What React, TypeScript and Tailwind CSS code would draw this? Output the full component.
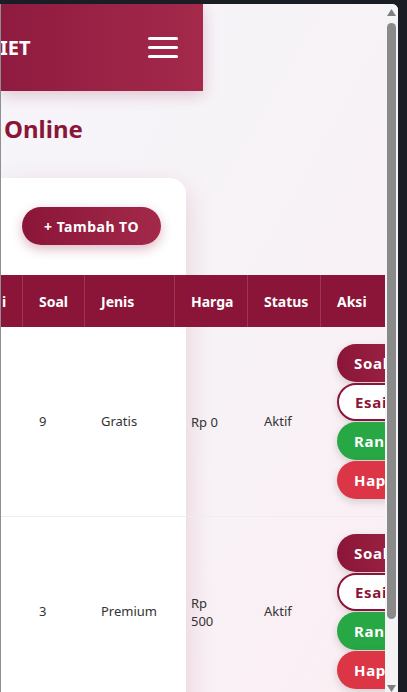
import React from "react";

const font = { fontFamily: '"Noto Sans", "Open Sans", Arial, sans-serif' };

function ActionButtons() {
  return (
    <div className="flex flex-col gap-px">
      <div className="h-[38px] w-[90px] rounded-full bg-gradient-to-r from-[#8b1538] to-[#a3294a] text-white font-bold text-[15px] tracking-[0.7px] flex items-center pl-[17px] shadow-[0_3px_8px_rgba(0,0,0,0.15)]">
        Soal
      </div>
      <div className="h-[38px] w-[90px] rounded-full bg-white border-2 border-[#8b1538] text-[#8b1538] font-bold text-[15px] tracking-[0.7px] flex items-center pl-[16px] shadow-[0_3px_8px_rgba(0,0,0,0.12)]">
        Esai
      </div>
      <div className="h-[38px] w-[100px] rounded-full bg-[#28a745] text-white font-bold text-[15px] tracking-[0.7px] flex items-center pl-[17px] shadow-[0_3px_8px_rgba(0,0,0,0.15)]">
        Ranking
      </div>
      <div className="h-[38px] w-[90px] rounded-full bg-[#dc3545] text-white font-bold text-[15px] tracking-[0.7px] flex items-center pl-[17px] shadow-[0_3px_8px_rgba(0,0,0,0.15)]">
        Hapus
      </div>
    </div>
  );
}

function Row({ soal, jenis, harga }: { soal: string; jenis: string; harga: string }) {
  return (
    <div className="grid grid-cols-[22px_62px_90px_73px_73px_120px] items-center border-b border-[#eeeeee] text-[13px] text-[#333333]">
      <div />
      <div className="px-4">{soal}</div>
      <div className="px-4">{jenis}</div>
      <div className="px-4 leading-[18px]">{harga}</div>
      <div className="px-4">Aktif</div>
      <div className="pl-4 py-[17px]">
        <ActionButtons />
      </div>
    </div>
  );
}

export default function App() {
  return (
    <div className="w-[407px] h-[692px] bg-[#1a1d23] pt-[4px] overflow-hidden" style={font}>
      <div className="w-[398px] h-[688px] rounded-tr-[6px] overflow-hidden flex bg-[#f5f4f8]">
        <div className="w-[385px] h-full overflow-hidden border-l border-[#8e8e94] bg-gradient-to-br from-[#f6f5fa] via-[#f7f3f7] to-[#fbeef3]">
          <div className="w-[202px] h-[87px] bg-gradient-to-r from-[#8f1b40] to-[#a4294b] flex items-center justify-between pr-[25px] shadow-[0_4px_15px_rgba(139,21,56,0.22)]">
            <span className="text-white font-bold text-[20px] -ml-[1px] leading-none">IET</span>
            <div className="flex flex-col gap-[6px] w-[30px]">
              <div className="h-[3px] rounded-full bg-white" />
              <div className="h-[3px] rounded-full bg-white" />
              <div className="h-[3px] rounded-full bg-white" />
            </div>
          </div>
          <div className="mt-[24px] pl-[3px] text-[24px] leading-[28px] font-bold text-[#8b1538]">
            Online
          </div>
          <div className="mt-[35px] w-[185px] h-[600px] bg-white rounded-tr-[16px] shadow-[0_10px_30px_rgba(139,21,56,0.16)] pt-[29px]">
            <div className="pl-[21px]">
              <div className="w-[139px] h-[38px] rounded-full bg-gradient-to-r from-[#8b1538] to-[#a3294a] text-white font-bold text-[14px] tracking-[0.5px] flex items-center justify-center shadow-[0_4px_12px_rgba(139,21,56,0.3)]">
                + Tambah TO
              </div>
            </div>
            <div className="mt-[30px] w-[440px]">
              <div className="grid grid-cols-[22px_62px_90px_73px_73px_120px] bg-[#8a1538] text-white font-bold text-[14px] h-[52px] items-stretch">
                <div className="border-r border-white/15 flex items-center pl-[1px]">i</div>
                <div className="border-r border-white/15 flex items-center px-4">Soal</div>
                <div className="border-r border-white/15 flex items-center px-4">Jenis</div>
                <div className="border-r border-white/15 flex items-center px-4">Harga</div>
                <div className="border-r border-white/15 flex items-center px-4">Status</div>
                <div className="flex items-center px-4">Aksi</div>
              </div>
              <Row soal="9" jenis="Gratis" harga="Rp 0" />
              <Row soal="3" jenis="Premium" harga="Rp 500" />
            </div>
          </div>
        </div>
        <div className="w-[13px] h-full bg-[#f4f4f6] flex flex-col items-center">
          <svg width="9" height="7" viewBox="0 0 9 7" className="mt-[5px]">
            <polygon points="4.5,0 9,7 0,7" fill="#7f7f7f" />
          </svg>
          <div className="mt-[7px] w-[9px] h-[596px] rounded-full bg-[#8a8a8a]" />
          <svg width="9" height="7" viewBox="0 0 9 7" className="mt-auto">
            <polygon points="0,0 9,0 4.5,7" fill="#7f7f7f" />
          </svg>
        </div>
      </div>
    </div>
  );
}
